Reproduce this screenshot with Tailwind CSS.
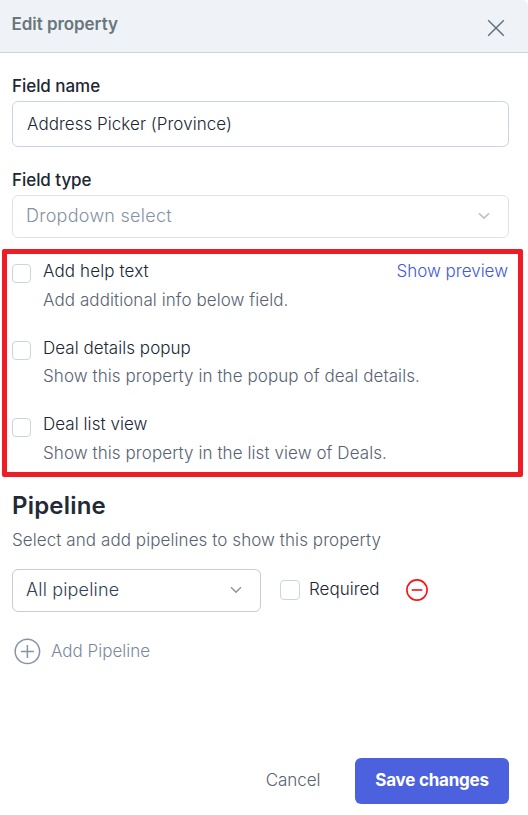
<!DOCTYPE html>
<html lang="en">
<head>
    <meta charset="UTF-8">
    <meta name="viewport" content="width=device-width, initial-scale=1.0">
    <title>Edit property</title>
    <script src="https://cdn.jsdelivr.net/npm/@tailwindcss/browser@4"></script>
    <style>
        body {
            font-family: 'Inter', sans-serif;
        }
    </style>
</head>
<body class="bg-white">
    <div class="relative flex flex-col w-[528px] h-[815px] overflow-hidden text-[17px] leading-6 font-light text-[#202733]">
        <!-- Header -->
        <header class="flex justify-between h-[53px] shrink-0 pl-[11.5px] pr-[23px] bg-[#eff3f8] border-b border-[#cbd5e1] rounded-tr-md">
            <h1 class="mt-3 font-semibold text-[#69767a] tracking-[-0.003em]">Edit property</h1>
            <button class="mt-[19px] size-[18px]" aria-label="Close">
                <svg class="size-[18px]" viewBox="0 0 18 18" fill="none" stroke="#64707f" stroke-width="1.5">
                    <path d="M1.2 1.2l15.6 15.6M16.8 1.2L1.2 16.8"/>
                </svg>
            </button>
        </header>

        <main class="flex flex-col pl-3 pr-[19px]">
            <label class="mt-[21px] font-medium tracking-[-0.003em]">Field name</label>
            <div class="mt-[3px] flex items-center h-[46px] px-3.5 border border-[#cbd5e1] rounded-md tracking-[0.002em]">Address Picker (Province)</div>

            <label class="mt-[21px] font-medium tracking-[-0.003em]">Field type</label>
            <div class="mt-[3px] flex items-center justify-between h-[43px] pl-[13px] pr-[18px] border border-[#e1e2e4] rounded-md text-[18px] text-[#8592a3]">
                <span class="-mt-0.5 tracking-[0.015em]">Dropdown select</span>
                <svg class="w-3 h-2 -mt-0.5" viewBox="0 0 12 8" fill="none" stroke="#c0c2c5" stroke-width="1.7">
                    <path d="M1 1.3l5 4.8 5-4.8"/>
                </svg>
            </div>

            <!-- Display options -->
            <section class="mt-[21px] flex flex-col">
                <div class="flex h-[77px]">
                    <span class="mt-[5px] size-[19px] border border-[#cbd5e1] rounded"></span>
                    <div class="ml-3 flex-1">
                        <p class="tracking-[0.007em]">Add help text</p>
                        <p class="mt-[5px] text-[#586272] tracking-[0.0045em]">Add additional info below field.</p>
                    </div>
                    <a class="mr-px text-[#4059de]">Show preview</a>
                </div>
                <div class="flex h-[77px]">
                    <span class="mt-[5px] size-[19px] border border-[#cbd5e1] rounded"></span>
                    <div class="ml-3 flex-1">
                        <p class="tracking-[0.002em]">Deal details popup</p>
                        <p class="mt-1 text-[#586272] tracking-[0.0045em]">Show this property in the popup of deal details.</p>
                    </div>
                </div>
                <div class="flex h-[77px]">
                    <span class="mt-[5px] size-[19px] border border-[#cbd5e1] rounded"></span>
                    <div class="ml-3 flex-1 -mt-px">
                        <p class="tracking-[0.003em]">Deal list view</p>
                        <p class="mt-[5px] text-[#586272] tracking-[0.0045em]">Show this property in the list view of Deals.</p>
                    </div>
                </div>
            </section>

            <!-- Pipeline -->
            <h2 class="text-2xl font-semibold text-[#222a35] tracking-[0.008em]">Pipeline</h2>
            <p class="mt-1.5 text-[#586272] tracking-[0.0045em]">Select and add pipelines to show this property</p>
            <div class="mt-[17px] flex items-center">
                <div class="flex items-center justify-between w-[249px] h-[43px] pl-[13px] pr-[18px] border border-[#cccccc] rounded-md text-[18px] text-[#334155]">
                    <span class="-mt-0.5 tracking-[0.009em]">All pipeline</span>
                    <svg class="w-3 h-2 -mt-px" viewBox="0 0 12 8" fill="none" stroke="#999999" stroke-width="1.5">
                        <path d="M1 1.3l5 4.8 5-4.8"/>
                    </svg>
                </div>
                <span class="ml-[19px] -mt-px size-5 border border-[#cbd5e1] rounded"></span>
                <span class="w-[70px] ml-[9px] -mt-[3px]">Required</span>
                <svg class="ml-[26px] -mt-0.5 size-6" viewBox="0 0 24 24" fill="none" stroke="#ff1010" stroke-width="1.6">
                    <circle cx="12" cy="12" r="10.1"/>
                    <path d="M6.7 12h10.6"/>
                </svg>
            </div>
            <button class="mt-[25px] flex items-center self-start text-[#7d889d]">
                <svg class="ml-px size-7" viewBox="0 0 28 28" fill="none" stroke="#8792a6" stroke-width="1.5">
                    <circle cx="14.4" cy="14.4" r="12.2"/>
                    <path d="M7.9 14.4h13M14.4 7.9v13"/>
                </svg>
                <span class="ml-2.5">Add Pipeline</span>
            </button>
        </main>

        <footer class="mt-auto mb-[11px] flex items-center justify-end pr-[19px]">
            <button class="mr-[34.5px] -mt-0.5 text-[#586272] tracking-[-0.003em]">Cancel</button>
            <button class="w-[154px] h-[46px] pb-0.5 rounded-md bg-[#4b61dd] font-bold tracking-[-0.013em] text-white">Save changes</button>
        </footer>

        <!-- Highlight around the display options -->
        <div class="absolute left-[2px] top-[249px] w-[521px] h-[228px] border-5 border-[#ee1c25] rounded-[2px] pointer-events-none"></div>
    </div>
</body>
</html>
